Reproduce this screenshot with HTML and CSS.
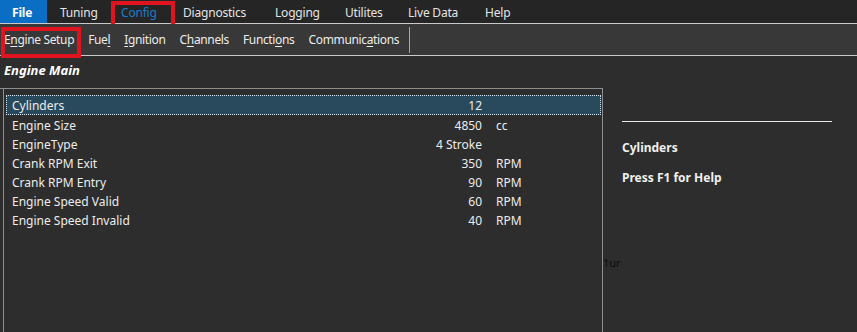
FILE: index.html
```html
<!DOCTYPE html>
<html lang="en">
<head>
  <meta charset="UTF-8" />
  <title>Engine Setup</title>
  <link rel="stylesheet" href="styles.css">
</head>
<body>
  <div class="app">
    <!-- Main menu -->
    <div class="menubar">
      <span class="menu file">File</span>
      <span class="menu m-tuning">Tuning</span>
      <span class="menu m-config active">Config</span>
      <span class="menu m-diag">Diagnostics</span>
      <span class="menu m-log">Logging</span>
      <span class="menu m-util">Utilites</span>
      <span class="menu m-live">Live Data</span>
      <span class="menu m-help">Help</span>
      <div class="mark mark-config"></div>
    </div>

    <!-- Sub menu -->
    <div class="toolbar">
      <span class="tool">E<u>n</u>gine Setup</span>
      <span class="tool">Fue<u>l</u></span>
      <span class="tool"><u>I</u>gnition</span>
      <span class="tool">C<u>h</u>annels</span>
      <span class="tool">Functi<u>o</u>ns</span>
      <span class="tool">Communic<u>a</u>tions</span>
      <span class="sep"></span>
      <div class="mark mark-setup"></div>
    </div>

    <div class="page-title">Engine Main</div>

    <div class="main">
      <div class="grid">
        <div class="row selected">
          <span class="name">Cylinders</span><span class="val">12</span><span class="unit"></span>
        </div>
        <div class="row">
          <span class="name">Engine Size</span><span class="val">4850</span><span class="unit">cc</span>
        </div>
        <div class="row">
          <span class="name">EngineType</span><span class="val">4 Stroke</span><span class="unit"></span>
        </div>
        <div class="row">
          <span class="name">Crank RPM Exit</span><span class="val">350</span><span class="unit">RPM</span>
        </div>
        <div class="row">
          <span class="name">Crank RPM Entry</span><span class="val">90</span><span class="unit">RPM</span>
        </div>
        <div class="row">
          <span class="name">Engine Speed Valid</span><span class="val">60</span><span class="unit">RPM</span>
        </div>
        <div class="row">
          <span class="name">Engine Speed Invalid</span><span class="val">40</span><span class="unit">RPM</span>
        </div>
      </div>

      <div class="help">
        <div class="help-rule"></div>
        <p class="help-title">Cylinders</p>
        <p class="help-text">Press F1 for Help</p>
        <span class="stray">1ur</span>
      </div>
    </div>
  </div>
</body>
</html>
```

FILE: styles.css
```css
* {
  box-sizing: border-box;
  margin: 0;
  padding: 0;
}

body {
  background: #2d2d2d;
  color: #e6e6e6;
  font-family: 'Noto Sans', 'Open Sans', sans-serif;
  font-size: 12px;
  width: 857px;
  height: 332px;
  overflow: hidden;
}

.app {
  display: flex;
  flex-direction: column;
  height: 332px;
}

/* menu bar */
.menubar {
  position: relative;
  display: flex;
  height: 24px;
  background: #252525;
  border-bottom: 1px solid #c9c9c9;
}

.menu {
  display: flex;
  align-items: center;
  height: 23px;
  padding-left: 13px;
  padding-top: 2px;
  color: #e4e4e4;
  letter-spacing: -0.2px;
}

.menu.file {
  width: 47px;
  padding-left: 12px;
  background: #0a6fc4;
  color: #fff;
  font-weight: bold;
}

.m-tuning { width: 61px; }
.m-config { width: 62px; }
.m-diag { width: 92px; }
.m-log { width: 70px; }
.m-util { width: 63px; }
.m-live { width: 77px; }
.m-help { width: 60px; }

.menu.active {
  color: #1c7cc9;
}

/* red annotation boxes */
.mark {
  position: absolute;
  border: 4px solid #e0141e;
  pointer-events: none;
}

.mark-config {
  left: 111px;
  top: 1px;
  width: 64px;
  height: 29px;
}

.mark-setup {
  left: 1px;
  top: 3px;
  width: 80px;
  height: 31px;
}

/* sub menu */
.toolbar {
  position: relative;
  display: flex;
  align-items: center;
  gap: 14px;
  height: 32px;
  padding-left: 4px;
  background: #383838;
  border-bottom: 1px solid #c9c9c9;
}

.tool {
  color: #ececec;
  letter-spacing: -0.35px;
}

.tool u {
  text-underline-offset: 2px;
}

.sep {
  width: 1px;
  height: 26px;
  margin-left: -4px;
  background: #a8a8a8;
}

.page-title {
  height: 32px;
  padding: 5px 0 0 4px;
  font-size: 13px;
  font-weight: bold;
  font-style: italic;
  color: #fff;
  -webkit-font-smoothing: none;
}

/* parameter list + help */
.main {
  flex: 1;
  display: flex;
}

.grid {
  width: 600px;
  margin-left: 3px;
  padding: 6px 1px 0 2px;
  border-top: 1px solid #8e8e8e;
  border-left: 1px solid #8e8e8e;
  border-right: 1px solid #8e8e8e;
  position: relative;
}

.grid::before {
  content: "";
  position: absolute;
  top: -1px;
  left: -4px;
  width: 4px;
  border-top: 1px solid #8e8e8e;
}

.row {
  display: flex;
  align-items: center;
  height: 19px;
  padding-left: 6px;
  padding-top: 1px;
  color: #ececec;
}

.row.selected {
  height: 20px;
  background: #284a5c;
  outline: 1px dotted #cfe6f2;
  outline-offset: -1px;
}

.name {
  flex: 1;
}

.val {
  width: 120px;
  text-align: right;
}

.unit {
  width: 119px;
  padding-left: 14px;
}

.help {
  flex: 1;
  position: relative;
  padding: 33px 0 0 19px;
}

.help-rule {
  width: 210px;
  height: 1px;
  background: #e8e8e8;
}

.help-title,
.help-text {
  font-weight: bold;
  color: #efefef;
}

.help-title {
  margin-top: 17px;
}

.help-text {
  margin-top: 13px;
}

.stray {
  position: absolute;
  left: 0;
  top: 167px;
  font-size: 11px;
  color: #0c0c0c;
}
```
